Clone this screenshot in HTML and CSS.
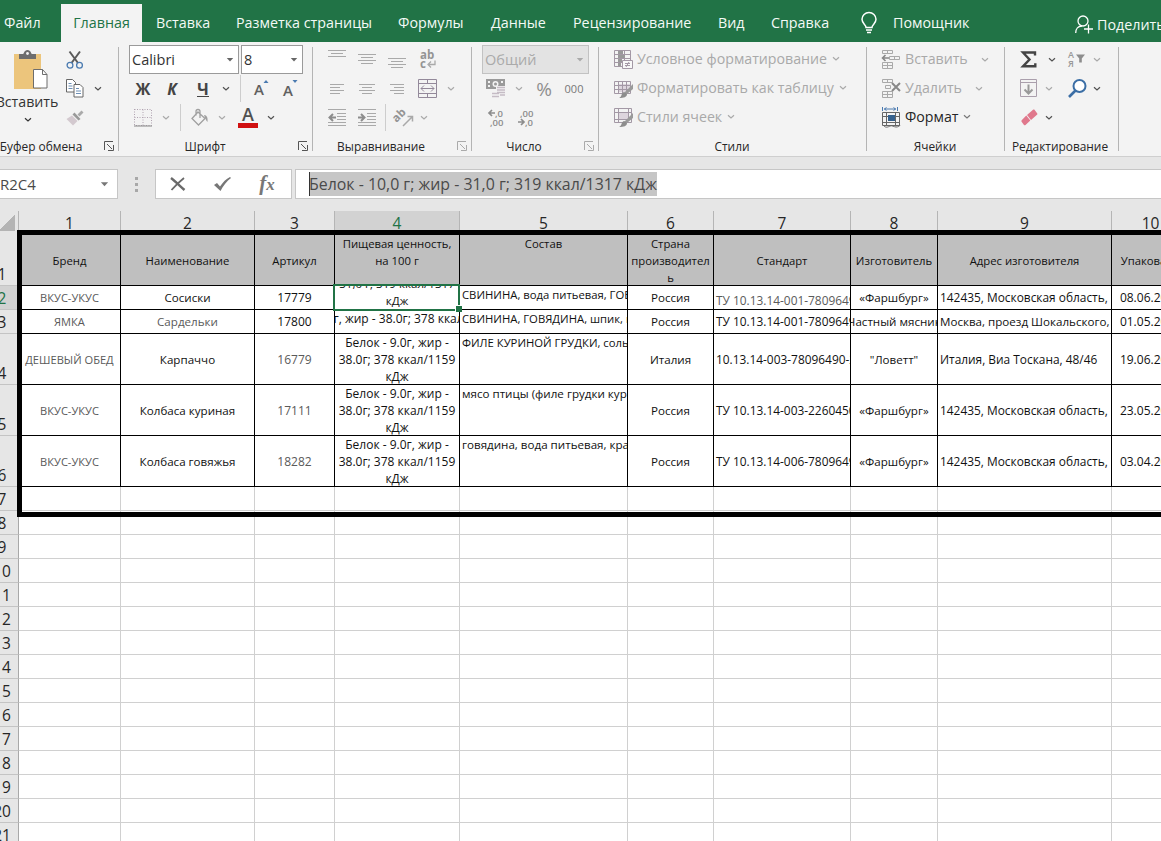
FILE: index.html
```
<!DOCTYPE html>
<html lang="ru">
<head>
    <meta charset="UTF-8">
    <meta name="viewport" content="width=device-width, initial-scale=1.0">
    <title>Таблица продукции</title>
    <link rel="stylesheet" href="styles.css">
</head>
<body>

<!-- shared shapes -->
<svg class="defs" width="0" height="0">
    <symbol id="chev" viewBox="0 0 8 6"><path d="M1 1.200L4 4L7 1.200" fill="none" stroke="currentColor" stroke-width="1.200"/></symbol>
    <symbol id="tri" viewBox="0 0 8 6"><path d="M0.8 1h6.4L4 4.6z" fill="currentColor"/></symbol>
    <symbol id="launch" viewBox="0 0 10 10"><path d="M0.5 9V0.5H9M3 3l5 5M9.5 4v5.5H4" fill="none" stroke="currentColor"/></symbol>
</svg>

<nav class="tabs">
    <span class="tab file">Файл</span>
    <span class="tab active">Главная</span>
    <span class="tab">Вставка</span>
    <span class="tab layout">Разметка страницы</span>
    <span class="tab formulas">Формулы</span>
    <span class="tab data">Данные</span>
    <span class="tab review">Рецензирование</span>
    <span class="tab view">Вид</span>
    <span class="tab help">Справка</span>
    <svg class="bulb" width="16" height="22" viewBox="0 0 16 22" fill="none" stroke="#fff" stroke-width="1.5"><path d="M5 15.5c0-3-4-4-4-8.300a7 6.700 0 0 1 14 0c0 4.300-4 5.300-4 8.300zM5 18h6M6 20.600h4"/></svg>
    <span class="tab assist">Помощник</span>
    <svg class="person" width="18" height="19" viewBox="0 0 18 19" fill="none" stroke="#fff" stroke-width="1.3"><circle cx="8" cy="6" r="5"/><path d="M0.700 18c0-4 2.500-7 6.300-7M9 14h9M13.500 9.500v9"/></svg>
    <span class="tab share">Поделиться</span>
</nav>

<div class="ribbon">
    <section class="group clipboard">
        <div class="rows split">
            <div class="paste">
                <svg width="36" height="40" viewBox="0 0 36 40"><path d="M1 4h27v35H1z" fill="#ecc57c"/><path d="M6 4h4c1 0 1-4 4.500-4S18 4 19 4h4v5H6z" fill="#6d6d6d"/><circle cx="14.500" cy="3.500" r="1.400" fill="#f3f3f3"/><path d="M20.500 19.500h9l4.500 5V38H20.500z" fill="#fff" stroke="#6d6d6d"/><path d="M29.500 19.500v5H34" fill="none" stroke="#6d6d6d"/></svg>
                <span>Вставить</span>
                <svg width="8" height="6"><use href="#chev"/></svg>
            </div>
            <div class="side">
                <div class="row cut"><svg width="18" height="18" viewBox="0 0 18 18" fill="none"><path d="M3.500 0.500L12 12M14 0.500L5.500 12" stroke="#5a5a5a" stroke-width="2"/><circle cx="4" cy="14.200" r="2.900" stroke="#4a7ab0" stroke-width="1.300"/><circle cx="13.500" cy="14.200" r="2.900" stroke="#4a7ab0" stroke-width="1.300"/></svg></div>
                <div class="row cut"><svg width="18" height="19" viewBox="0 0 18 19" fill="#fff" stroke="#666"><path d="M0.500 0.500h6l3 3v9.500h-9z"/><path d="M2.500 4.500h3M2.500 7h4M2.500 9.500h4" stroke="#6d8fb5"/><path d="M8 5.500h6l3 3V18H8z"/><path d="M10 9.500h3M10 12h5M10 14.500h5" stroke="#6d8fb5"/></svg>
                    <svg width="8" height="6"><use href="#chev"/></svg></div>
                <div class="row cut"><svg width="18" height="16" viewBox="0 0 18 16"><path d="M15.500 0.500l2 2-4 4-2-2z" fill="#aaa"/><path d="M8.500 2.500l6 6.500-2 1.500-6-6z" fill="#999"/><path d="M6 5.500l5.500 5.500L7 15.500 0.500 9z" fill="#d3c9cf"/></svg></div>
            </div>
        </div>
        <div class="label"><span>Буфер обмена</span><svg width="10" height="10"><use href="#launch"/></svg></div>
    </section>

    <section class="group font">
        <div class="rows">
            <div class="row boxes">
                <div class="combo name">Calibri<svg width="8" height="6"><use href="#tri"/></svg></div>
                <div class="combo size">8<svg width="8" height="6"><use href="#tri"/></svg></div>
            </div>
            <div class="row tools f2">
                <b>Ж</b><b><i>К</i></b><b class="under">Ч</b>
                <svg width="8" height="6"><use href="#chev"/></svg>
                <i class="bar"></i>
                <svg width="15" height="18" viewBox="0 0 15 18"><text x="0" y="15" class="glyph">A</text><path d="M9.500 3l2.500-3 2.500 3z" fill="#4a7ab0"/></svg>
                <svg width="15" height="18" viewBox="0 0 15 18"><text x="0" y="16" class="glyph">A</text><path d="M9.500 0l2.500 3 2.500-3z" fill="#4a7ab0"/></svg>
            </div>
            <div class="row tools f3">
                <svg width="18" height="18" viewBox="0 0 18 18" fill="none" stroke="#b0a3b0"><path d="M0.500 0.500h17v16H0.500M0.500 0v16M9 0.500v16M0.500 8.500h17" stroke-dasharray="1 1.500"/><path d="M0 17h18" stroke="#888"/></svg>
                <svg class="dim" width="8" height="6"><use href="#chev"/></svg>
                <i class="bar"></i>
                <svg width="18" height="18" viewBox="0 0 18 18" fill="none" stroke="#a0a0a0" stroke-width="1.300"><path d="M7 3L14 9.500 7.500 16 1 9.500zM5 6.500V2.500a2 2 0 0 1 4 0V9"/><path d="M13 6c3 0 4 3 3.500 7-1.500-1-1.500-3-2.500-4" fill="#a0a0a0" stroke="none"/></svg>
                <svg class="dim" width="8" height="6"><use href="#chev"/></svg>
                <svg width="20" height="21" viewBox="0 0 20 21"><text x="4" y="13.500" class="glyph big">A</text><path d="M0 16h20v5H0z" fill="#d01010"/></svg>
                <svg width="8" height="6"><use href="#chev"/></svg>
            </div>
        </div>
        <div class="label"><span>Шрифт</span><svg width="10" height="10"><use href="#launch"/></svg></div>
    </section>

    <section class="group align">
        <div class="rows dim">
            <div class="row tools a1">
                <svg width="18" height="20" viewBox="0 0 18 20" stroke="currentColor"><path d="M0 0.500h18M3 3.500h12M0 6.500h18"/></svg>
                <svg width="18" height="20" viewBox="0 0 18 20" stroke="currentColor"><path d="M0 4.500h18M3 7.500h12M0 10.500h18M3 13.500h12"/></svg>
                <svg width="18" height="20" viewBox="0 0 18 20" stroke="currentColor"><path d="M0 8.500h18M3 11.500h12M0 14.500h18M3 17.500h12"/></svg>
                <svg width="17" height="20" viewBox="0 0 17 20" fill="none" stroke="currentColor"><text x="0" y="9" class="small">ab</text><text x="0" y="18" class="small">c</text><path d="M15 10.500v4H8M11 11.500l-3 3 3 3" stroke-width="1.300"/></svg>
            </div>
            <div class="row tools a2">
                <svg width="14" height="12" viewBox="0 0 14 12" stroke="currentColor"><path d="M0 1.500h14M0 4.500h10M0 7.500h14M0 10.500h10"/></svg>
                <svg width="16" height="12" viewBox="0 0 16 12" stroke="currentColor"><path d="M0 1.500h16M3 4.500h10M0 7.500h16M3 10.500h10"/></svg>
                <svg width="14" height="12" viewBox="0 0 14 12" stroke="currentColor"><path d="M0 1.500h14M4 4.500h10M0 7.500h14M4 10.500h10"/></svg>
                <svg width="19" height="19" viewBox="0 0 19 19" fill="none" stroke="#93899a"><path d="M0.500 0.500h18v18H0.500zM0.500 4.500h18M0.500 14.500h18M9.500 0.500v4M9.500 14.500v4M3 9.500h13M6 6.500l-3 3 3 3M13 6.500l3 3-3 3"/></svg>
                <svg width="8" height="6"><use href="#chev"/></svg>
            </div>
            <div class="row tools a3">
                <svg width="18" height="17" viewBox="0 0 18 17" fill="none" stroke="currentColor"><path d="M0 0.500h18M9 4.500h9M9 7.500h9M9 10.500h9M0 13.500h18M0 16.500h18"/><path d="M8 8.500H2M5 5l-3.500 3.500L5 12" stroke="#8d8d8d" stroke-width="2"/></svg>
                <svg width="18" height="17" viewBox="0 0 18 17" fill="none" stroke="currentColor"><path d="M0 0.500h18M9 4.500h9M9 7.500h9M9 10.500h9M0 13.500h18M0 16.500h18"/><path d="M0 8.500h6M3 5l3.500 3.500L3 12" stroke="#8d8d8d" stroke-width="2"/></svg>
                <i class="bar"></i>
                <svg width="20" height="20" viewBox="0 0 20 20" fill="none" stroke="currentColor"><text x="0" y="11" transform="rotate(-45 6 10)" class="small">ab</text><path d="M9 18l9-9M13.500 8.500H18.500V13.500" stroke-width="1.500"/></svg>
                <svg width="8" height="6"><use href="#chev"/></svg>
            </div>
        </div>
        <div class="label off"><span>Выравнивание</span><svg width="10" height="10"><use href="#launch"/></svg></div>
    </section>

    <section class="group number">
        <div class="rows dim">
            <div class="row boxes">
                <div class="combo format">Общий<svg width="8" height="6"><use href="#tri"/></svg></div>
            </div>
            <div class="row tools n2">
                <svg width="20" height="19" viewBox="0 0 20 19"><path d="M0 0h19v10H0z" fill="#9a9a9a"/><path d="M2 2h2v2H2zM15 2h2v2h-2zM2 6h2v2H2z" fill="#f3f3f3"/><circle cx="9.500" cy="5" r="3" fill="#f3f3f3"/><circle cx="9.500" cy="5" r="1.500" fill="#9a9a9a"/><path d="M10 7h10v12H5v-6h5z" fill="#f3f3f3"/><path d="M11 8.500h8M11 11h8M11 13.500h8M6 14.500h7M6 17.500h7M14 16h5" stroke="#c5bcc5" stroke-width="1.600"/></svg>
                <svg width="8" height="6"><use href="#chev"/></svg>
                <span class="percent">%</span><span class="zeros">000</span>
            </div>
            <div class="row tools n3">
                <svg width="17" height="20" viewBox="0 0 17 20" fill="none" stroke="currentColor"><text x="7" y="9" class="digit">,0</text><text x="2" y="18" class="digit">,00</text><path d="M1 5h6M4 2L1 5l3 3" stroke="#8d8d8d" stroke-width="1.700"/></svg>
                <svg width="17" height="20" viewBox="0 0 17 20" fill="none" stroke="currentColor"><text x="2" y="9" class="digit">,00</text><text x="7" y="18" class="digit">,0</text><path d="M0 14h6M3 11l3 3-3 3" stroke="#8d8d8d" stroke-width="1.700"/></svg>
            </div>
        </div>
        <div class="label off"><span>Число</span><svg width="10" height="10"><use href="#launch"/></svg></div>
    </section>

    <section class="group styles">
        <div class="rows dim">
            <div class="row item">
                <svg width="20" height="20" viewBox="0 0 20 20" fill="none" stroke="#a398a5"><path d="M0.500 0.500h16v16h-16zM0.500 4.500h16M0.500 8.500h16M0.500 12.500h16M4.500 0.500v16M10.500 0.500v16"/><path d="M4 1h5v3H4zM4 5h7v3H4zM4 9h4v3H4zM4 13h3v3H4z" fill="#999" stroke="none"/><path d="M8.500 10.500h10v8h-10z" fill="#f8f8f8"/><path d="M11 13.500h5M11 15.500h5M15 12l-3 5"/></svg>
                <span>Условное форматирование</span><svg width="8" height="6"><use href="#chev"/></svg>
            </div>
            <div class="row item">
                <svg width="20" height="20" viewBox="0 0 20 20" fill="none" stroke="#a398a5"><path d="M5 5h12v8H5z" fill="#ddd5dd" stroke="none"/><path d="M0.500 2.500h16v12h-16zM0.500 6.500h16M0.500 10.500h16M4.500 2.500v12M8.500 2.500v12M12.500 2.500v12"/><path d="M19 5v5l-6 5-3-1z" fill="#9a9a9a" stroke="none"/><path d="M10 13l3 2c0 3-3 4-8 4 3-1 2-5 5-6z" fill="#8d8d8d" stroke="none"/></svg>
                <span>Форматировать как таблицу</span><svg width="8" height="6"><use href="#chev"/></svg>
            </div>
            <div class="row item">
                <svg width="20" height="20" viewBox="0 0 20 20" fill="none" stroke="#a398a5"><path d="M5 5h9v6H5z" fill="#ddd5dd" stroke="none"/><path d="M0.500 0.500h17v14h-17zM0.500 4.500h17M0.500 11.500h14M4.500 0.500v14M14.500 0.500v10"/><path d="M19 5v5l-6 5-3-1z" fill="#9a9a9a" stroke="none"/><path d="M10 13l3 2c0 3-3 4-8 4 3-1 2-5 5-6z" fill="#8d8d8d" stroke="none"/></svg>
                <span>Стили ячеек</span><svg width="8" height="6"><use href="#chev"/></svg>
            </div>
        </div>
        <div class="label"><span>Стили</span></div>
    </section>

    <section class="group cells">
        <div class="rows">
            <div class="row item dim wide">
                <svg width="19" height="19" viewBox="0 0 19 19" fill="none" stroke="currentColor"><path d="M0.500 0.500h10v3h-10zM5.500 0.500v3M7.500 6.500h10v3h-10zM12.500 6.500v3M0.500 12.500h10v6h-10zM0.500 15.500h10M5.500 12.500v6"/><path d="M7 8H1M3.500 5l-3 3 3 3" stroke="#888" stroke-width="1.600"/></svg>
                <span>Вставить</span><svg width="8" height="6"><use href="#chev"/></svg>
            </div>
            <div class="row item dim wide">
                <svg width="19" height="19" viewBox="0 0 19 19" fill="none" stroke="currentColor"><path d="M0.500 0.500h10v3h-10zM5.500 0.500v3M3.500 6.500h5v3h-5zM0.500 12.500h10v6h-10zM0.500 15.500h10M5.500 12.500v6"/><path d="M10 4l8 8M18 4l-8 8" stroke="#888" stroke-width="2"/></svg>
                <span>Удалить</span><svg width="8" height="6"><use href="#chev"/></svg>
            </div>
            <div class="row item">
                <svg width="19" height="21" viewBox="0 0 19 21" fill="none" stroke="#666"><path d="M0.500 5.500h17v13h-17zM0.500 9.500h17M0.500 15.500h17M4.500 5.500v13M13.500 5.500v13"/><path d="M2 19c2 2 4 1 6 0s4 1 6 1 4-1 4-2"/><path d="M6 8h7v6H6z" fill="#35618e" stroke="none"/><path d="M0.500 0v4M15.500 0v4M2 2h12M4.500 0.500L2.500 2l2 1.500M11.500 0.500l2 1.500-2 1.500" stroke="#4a7ab0"/></svg>
                <span>Формат</span><svg width="8" height="6"><use href="#chev"/></svg>
            </div>
        </div>
        <div class="label"><span>Ячейки</span></div>
    </section>

    <section class="group editing">
        <div class="rows">
            <div class="row tools e1">
                <svg width="16" height="17" viewBox="0 0 16 17" fill="none" stroke="#444" stroke-width="2.400"><path d="M14 4.500V1.500H2l6.500 7L2 15.300h12.300v-3"/></svg>
                <svg width="8" height="6"><use href="#chev"/></svg>
                <svg class="dim" width="18" height="17" viewBox="0 0 18 17"><text x="0" y="7" class="tiny">А</text><text x="0" y="15.500" class="tiny">Я</text><path d="M8 3.500h9l-3.200 4v4h-2.600v-4z" fill="#8d8d8d"/></svg>
                <svg class="dim" width="8" height="6"><use href="#chev"/></svg>
            </div>
            <div class="row tools e2">
                <svg width="18" height="19" viewBox="0 0 18 19" fill="none"><path d="M0.500 0.500h16v17h-16zM0.500 3.500h16" stroke="#aa9fac"/><path d="M8.500 5.500v9M4.500 10.500l4 4 4-4" stroke="#999" stroke-width="2"/></svg>
                <svg class="dim" width="8" height="6"><use href="#chev"/></svg>
                <svg class="find" width="19" height="19" viewBox="0 0 19 19" fill="none" stroke="#3b6ea5"><circle cx="11.500" cy="7" r="6" stroke-width="2" fill="#fff"/><path d="M7.500 11.500L1 18" stroke-width="2.600"/></svg>
                <svg width="8" height="6"><use href="#chev"/></svg>
            </div>
            <div class="row tools e3">
                <svg width="17" height="17" viewBox="0 0 17 17"><path d="M6 6L12 0.800c.6-.5 1-.5 1.500 0l2.600 3.400c.5.600.4 1-.1 1.500L10 11z" fill="#e0788c"/><path d="M5.300 6.600l4 5L4.500 16c-.5.400-1 .400-1.500 0L.6 12.800c-.4-.6-.4-1 .1-1.500z" fill="#e0788c"/></svg>
                <svg width="8" height="6"><use href="#chev"/></svg>
            </div>
        </div>
        <div class="label"><span>Редактирование</span></div>
    </section>
</div>

<div class="formula-bar">
    <div class="name-box">R2C4<svg width="9" height="7" viewBox="0 0 8 6"><use href="#tri"/></svg></div>
    <div class="dots"><i></i><i></i><i></i></div>
    <div class="buttons">
        <svg width="16" height="14" viewBox="0 0 16 14" fill="none" stroke="#6a6a6a"><path d="M1 1c4 3 9 8 13.500 12" stroke-width="2.400"/><path d="M14 1C9 5 5 9 1.500 13" stroke-width="1.800"/></svg>
        <svg width="17" height="14" viewBox="0 0 17 14"><path d="M0 8l3-2 3 3.500C9 5 12 2 16 0l1 1C13 4 9 9 6.500 14z" fill="#777"/></svg>
        <span class="fx">f<small>x</small></span>
    </div>
    <div class="formula"><span>Белок - 10,0 г; жир - 31,0 г; 319 ккал/1317 кДж</span></div>
</div>

<div class="sheet" id="sheet">
    <div class="outline"></div>
    <div class="cursor"></div>
</div>

<script>
    // one entry per cell: text, or [text, extra classes]
    const energy = "Белок - 9.0г, жир - 38.0г; 378 ккал/1159 кДж";
    const rows = [
        ["Бренд", "Наименование", "Артикул", ["Пищевая ценность, на 100 г", "wrap top"], ["Состав", "top"],
            ["Страна производител ь", "wrap top"], "Стандарт", "Изготовитель", "Адрес изготовителя", "Упаковано"],
        [["ВКУС-УКУС", "gray caps"], "Сосиски", ["17779", "num"], ["Белок - 10,0 г; жир - 31,0 г; 319 ккал/1317 кДж", "wrap bottom"],
            ["СВИНИНА, вода питьевая, ГОВЯДИНА", "left top mixed"], "Россия", ["ТУ 10.13.14-001-78096490", "left bottom gray num"],
            "«Фаршбург»", ["142435, Московская область,", "left num"], ["08.06.2020", "num"]],
        [["ЯМКА", "gray caps"], ["Сардельки", "gray"], ["17800", "num"], [energy, "top num"],
            ["СВИНИНА, ГОВЯДИНА, шпик, вода", "left top mixed"], "Россия", ["ТУ 10.13.14-001-78096490", "left num"],
            "Частный мясник", ["Москва, проезд Шокальского,", "left"], ["01.05.2020", "num"]],
        [["ДЕШЕВЫЙ ОБЕД", "gray caps"], "Карпаччо", ["16779", "num gray"], [energy, "wrap top num"],
            ["ФИЛЕ КУРИНОЙ ГРУДКИ, соль", "left top mixed"], "Италия", ["10.13.14-003-78096490-2020", "left num"],
            "\"Ловетт\"", ["Италия, Виа Тоскана, 48/46", "left num"], ["19.06.2020", "num"]],
        [["ВКУС-УКУС", "gray caps"], "Колбаса куриная", ["17111", "num gray"], [energy, "wrap top num"],
            ["мясо птицы (филе грудки кур.", "left top"], "Россия", ["ТУ 10.13.14-003-22604500", "left num"],
            "«Фаршбург»", ["142435, Московская область,", "left num"], ["23.05.2020", "num"]],
        [["ВКУС-УКУС", "gray caps"], "Колбаса говяжья", ["18282", "num gray"], [energy, "wrap top num"],
            ["говядина, вода питьевая, крахмал", "left top"], "Россия", ["ТУ 10.13.14-006-78096490", "left num"],
            "«Фаршбург»", ["142435, Московская область,", "left num"], ["03.04.2020", "num"]]
    ];

    const sheet = document.getElementById("sheet");

    function addCell(text, className) {
        const cell = document.createElement("div");
        cell.className = className;
        if (text) {
            const span = document.createElement("span");
            span.textContent = text;
            cell.appendChild(span);
        }
        sheet.appendChild(cell);
    }

    // column numbers
    addCell("", "corner");
    for (let c = 1; c <= 10; c++) {
        addCell(String(c), c === 4 ? "col-head picked" : "col-head");
    }

    for (let r = 1; r <= 21; r++) {
        addCell(String(r), r === 2 ? "row-head picked" : "row-head");
        for (let c = 0; c < 10; c++) {
            if (r > rows.length) {
                addCell("", "cell");
                continue;
            }
            const item = [].concat(rows[r - 1][c]);
            addCell(item[0], "cell filled " + (r === 1 ? "title " : "") + (item[1] || ""));
        }
    }
</script>

</body>
</html>
```
FILE: styles.css
```
* {
    box-sizing: border-box;
}

body {
    margin: 0;
    height: 841px;
    overflow: hidden;
    background: #fff;
    color: #262626;
    font-family: "Open Sans", "Noto Sans", sans-serif;
    font-size: 14.2px;
}

svg {
    display: block;
    flex: none;
    overflow: visible;
}

.defs {
    position: absolute;
}

/* tabs */
.tabs {
    display: flex;
    height: 42px;
    padding-top: 4px;
    background: #217346;
    color: #f4faf6;
    font-size: 14.3px;
    overflow: hidden;
}

.tab {
    flex: none;
    height: 38px;
    line-height: 37px;
    white-space: nowrap;
    width: 80px;
}

.tab.file { width: 57px; margin-left: 4px; }

.tab.active {
    width: 81px;
    margin-right: 14px;
    background: #f3f3f3;
    color: #217346;
    text-align: center;
}

.tab.layout { width: 162px; }
.tab.formulas { width: 93px; }
.tab.data { width: 82px; }
.tab.review { width: 145px; }
.tab.view { width: 53px; }
.tab.help { width: 90px; }
.tab.assist { width: 182px; margin-left: 16px; }
.tab.share { margin-left: 4px; line-height: 41px; }

.bulb { margin-top: 8px; }
.person { margin-top: 11px; }

/* ribbon */
.ribbon {
    display: flex;
    height: 115px;
    padding-top: 5px;
    background: #f3f3f3;
    border-bottom: 1px solid #cfcfcf;
}

.group {
    flex: none;
    height: 104px;
    border-right: 1px solid #b4b4b4;
    color: #505050;
}

.group.clipboard { width: 119px; }
.group.font { width: 194px; }
.group.align { width: 159px; }
.group.number { width: 127px; }
.group.styles { width: 268px; }
.group.cells { width: 138px; }
.group.editing { width: 114px; }

.rows {
    height: 87px;
    margin-top: -2px;
}

.row {
    display: flex;
    align-items: center;
    height: 29px;
}

.tools {
    display: grid;
    justify-items: center;
    padding-left: 9px;
}

.dim {
    color: #a9a9a9;
}

.label {
    display: flex;
    align-items: center;
    height: 19px;
    margin-top: 4px;
    font-size: 11.9px;
    color: #262626;
}

.label span {
    text-align: center;
    white-space: nowrap;
}

.label svg { color: #555; }
.label.off svg { color: #aaa; }

.clipboard .label span { width: 106px; margin-left: -12px; margin-right: 10px; }
.font .label span { width: 172px; margin-right: 7px; }
.align .label span { width: 136px; margin-right: 8px; }
.number .label span { width: 104px; margin-right: 8px; }
.styles .label span { width: 266px; }
.cells .label span { width: 136px; }
.editing .label span { width: 110px; }

/* clipboard */
.split {
    display: flex;
}

.paste {
    display: flex;
    flex-direction: column;
    align-items: center;
    width: 55px;
    padding-top: 5px;
    color: #333;
}

.paste > svg:first-child { margin-left: 6px; }
.paste span { height: 20px; margin: 2px 0 5px -1px; line-height: 20px; }

.side { padding-left: 11px; }
.cut { gap: 10px; }

/* font, alignment, number */
.boxes {
    gap: 2px;
    padding-left: 10px;
}

.combo {
    display: flex;
    align-items: center;
    justify-content: space-between;
    height: 29px;
    padding: 0 4px 0 2px;
    border: 1px solid #9a9a9a;
    background: #fff;
    color: #333;
    font-size: 14.5px;
}

.combo.name { width: 110px; }
.combo.size { width: 62px; }

.combo.format {
    width: 107px;
    border-color: #c2c2c2;
    background: #e3e3e3;
    color: #aaa;
}

.combo svg { color: #666; }
.combo.format svg { color: #aaa; }

.f2 { grid-template-columns: 30px 28px 34px 12px 16px 26px 32px; }
.f3 { grid-template-columns: 30px 16px 12px 28px 16px 36px 10px; }
.a1 { grid-template-columns: 30px 30px 30px 32px; }
.a2 { grid-template-columns: 30px 30px 30px 31px 16px; }
.a3 { grid-template-columns: 30px 30px 6px 32px 8px; }
.n2 { grid-template-columns: 30px 16px 34px 26px; }
.n3 { grid-template-columns: 30px 30px; }
.e1 { grid-template-columns: 30px 16px 34px 6px; }
.e2 { grid-template-columns: 30px 10px 40px 6px; }
.e3 { grid-template-columns: 30px 10px; }

.find { margin-left: 6px; }

.tools b {
    font-size: 15.8px;
    line-height: 18px;
    color: #444;
}

.under {
    border-bottom: 1px solid #444;
    height: 17px;
}

.bar {
    width: 1px;
    height: 27px;
    background: #cdcdcd;
}

.glyph {
    font: 600 15px "Open Sans", sans-serif;
    fill: #606060;
}

.glyph.big {
    font-size: 18px;
    fill: #505050;
}

.small {
    font: 700 11.5px "Open Sans", sans-serif;
    fill: #949494;
    stroke: none;
}

.digit {
    font: 600 9.5px "Open Sans", sans-serif;
    fill: #8c8c8c;
    stroke: none;
}

.tiny {
    font: 600 9px "Open Sans", sans-serif;
    fill: #999;
}

.percent {
    font-size: 19px;
    color: #8f8f8f;
}

.zeros {
    font-size: 11px;
    color: #777;
}

/* styles and cells */
.item {
    gap: 3px;
    padding-left: 15px;
    white-space: nowrap;
}

.item span { line-height: 28px; height: 29px; }
.cells .item:not(.dim) { color: #262626; }
.cells .item { gap: 4px; }
.item svg:last-child { margin-left: 2px; margin-bottom: 2px; color: #777; }
.dim .item svg:last-child { color: #a9a9a9; }
.item.wide svg:last-child { margin-left: 9px; margin-bottom: 0; color: #a9a9a9; }
.cells .item:not(.wide) svg:last-child { margin-left: 0; }

/* formula bar */
.formula-bar {
    display: flex;
    height: 54px;
    padding-top: 12px;
    background: #e6e6e6;
    color: #4a4a4a;
}

.name-box {
    display: flex;
    align-items: center;
    justify-content: space-between;
    width: 118px;
    height: 30px;
    padding-right: 8px;
    border: 1px solid #c6c6c6;
    border-left: 0;
    background: #fff;
    font-size: 15px;
}

.name-box svg { color: #777; }

.dots {
    display: flex;
    flex-direction: column;
    gap: 3px;
    width: 37px;
    padding: 8px 0 0 17px;
}

.dots i {
    width: 3px;
    height: 3px;
    background: #a8a8a8;
}

.buttons {
    display: grid;
    grid-template-columns: 43px 47px 42px;
    align-items: center;
    justify-items: center;
    width: 137px;
    height: 30px;
    border: 1px solid #c6c6c6;
    background: #fff;
}

.fx {
    font: italic bold 21px/26px "Liberation Serif", serif;
    color: #777;
}

.fx small {
    font-size: 17px;
}

.formula {
    flex: 1;
    height: 30px;
    margin-left: 3px;
    padding: 2px 0 0 13px;
    border: 1px solid #c6c6c6;
    border-right: 0;
    background: #fff;
    white-space: nowrap;
}

.formula span {
    display: inline-block;
    height: 24px;
    border-left: 1px solid #333;
    background: #c6c6c6;
    font-size: 15.9px;
    line-height: 24px;
    text-indent: -1px;
}

/* sheet */
.sheet {
    position: relative;
    display: grid;
    grid-template-columns: 33px 102px 134px 80px 125px 168px 86px 137px 87px 174px 78px;
    grid-template-rows: 24px 51px 24px 24px 51px 51px 51px;
    grid-auto-rows: 24px;
    width: 1204px;
    margin-left: -14px;
}

.corner,
.col-head,
.row-head {
    background: #e6e6e6;
    color: #262626;
    font-size: 15.5px;
}

.corner {
    border-right: 1px solid #b5b5b5;
    background: linear-gradient(135deg, transparent 50%, #b4b4b4 50%) 13px 4px / 16px 16px no-repeat #e6e6e6;
}

.col-head {
    border-right: 1px solid #b5b5b5;
    line-height: 25px;
    text-align: center;
}

.row-head {
    display: flex;
    align-items: flex-end;
    justify-content: center;
    border-right: 1px solid #a8a8a8;
    border-bottom: 1px solid #c4c4c4;
    line-height: 22px;
}

.picked {
    background: #d2d2d2;
    color: #217346;
}

.cell {
    display: flex;
    align-items: center;
    justify-content: center;
    overflow: hidden;
    border-right: 1px solid #d0d0d0;
    border-bottom: 1px solid #d0d0d0;
    color: #111;
    font-size: 11.6px;
    line-height: 17px;
    text-align: center;
    white-space: nowrap;
}

.filled {
    border-color: #000;
}

.title {
    background: #bfbfbf;
    font-size: 11.3px;
}

.wrap { white-space: normal; }
.top { align-items: flex-start; }
.bottom { align-items: flex-end; }
.left { justify-content: flex-start; padding-left: 2px; }
.num { font-size: 12px; }
.left.num { font-size: 11.9px; }
.caps { font-size: 11.1px; }
.mixed { font-size: 11.3px; }
.gray { color: #5a5a5a; }

/* thick frame round the filled range */
.outline {
    position: absolute;
    left: 31px;
    top: 19px;
    width: 1200px;
    height: 287px;
    border: 5px solid #000;
    z-index: 2;
}

.cursor {
    position: absolute;
    left: 347px;
    top: 73px;
    width: 127px;
    height: 27px;
    border: 2px solid #217346;
    z-index: 1;
}

.cursor::after {
    content: "";
    position: absolute;
    right: -4px;
    bottom: -3px;
    width: 6px;
    height: 6px;
    border: 1px solid #fff;
    border-width: 1px 0 0 1px;
    background: #217346;
}
```
